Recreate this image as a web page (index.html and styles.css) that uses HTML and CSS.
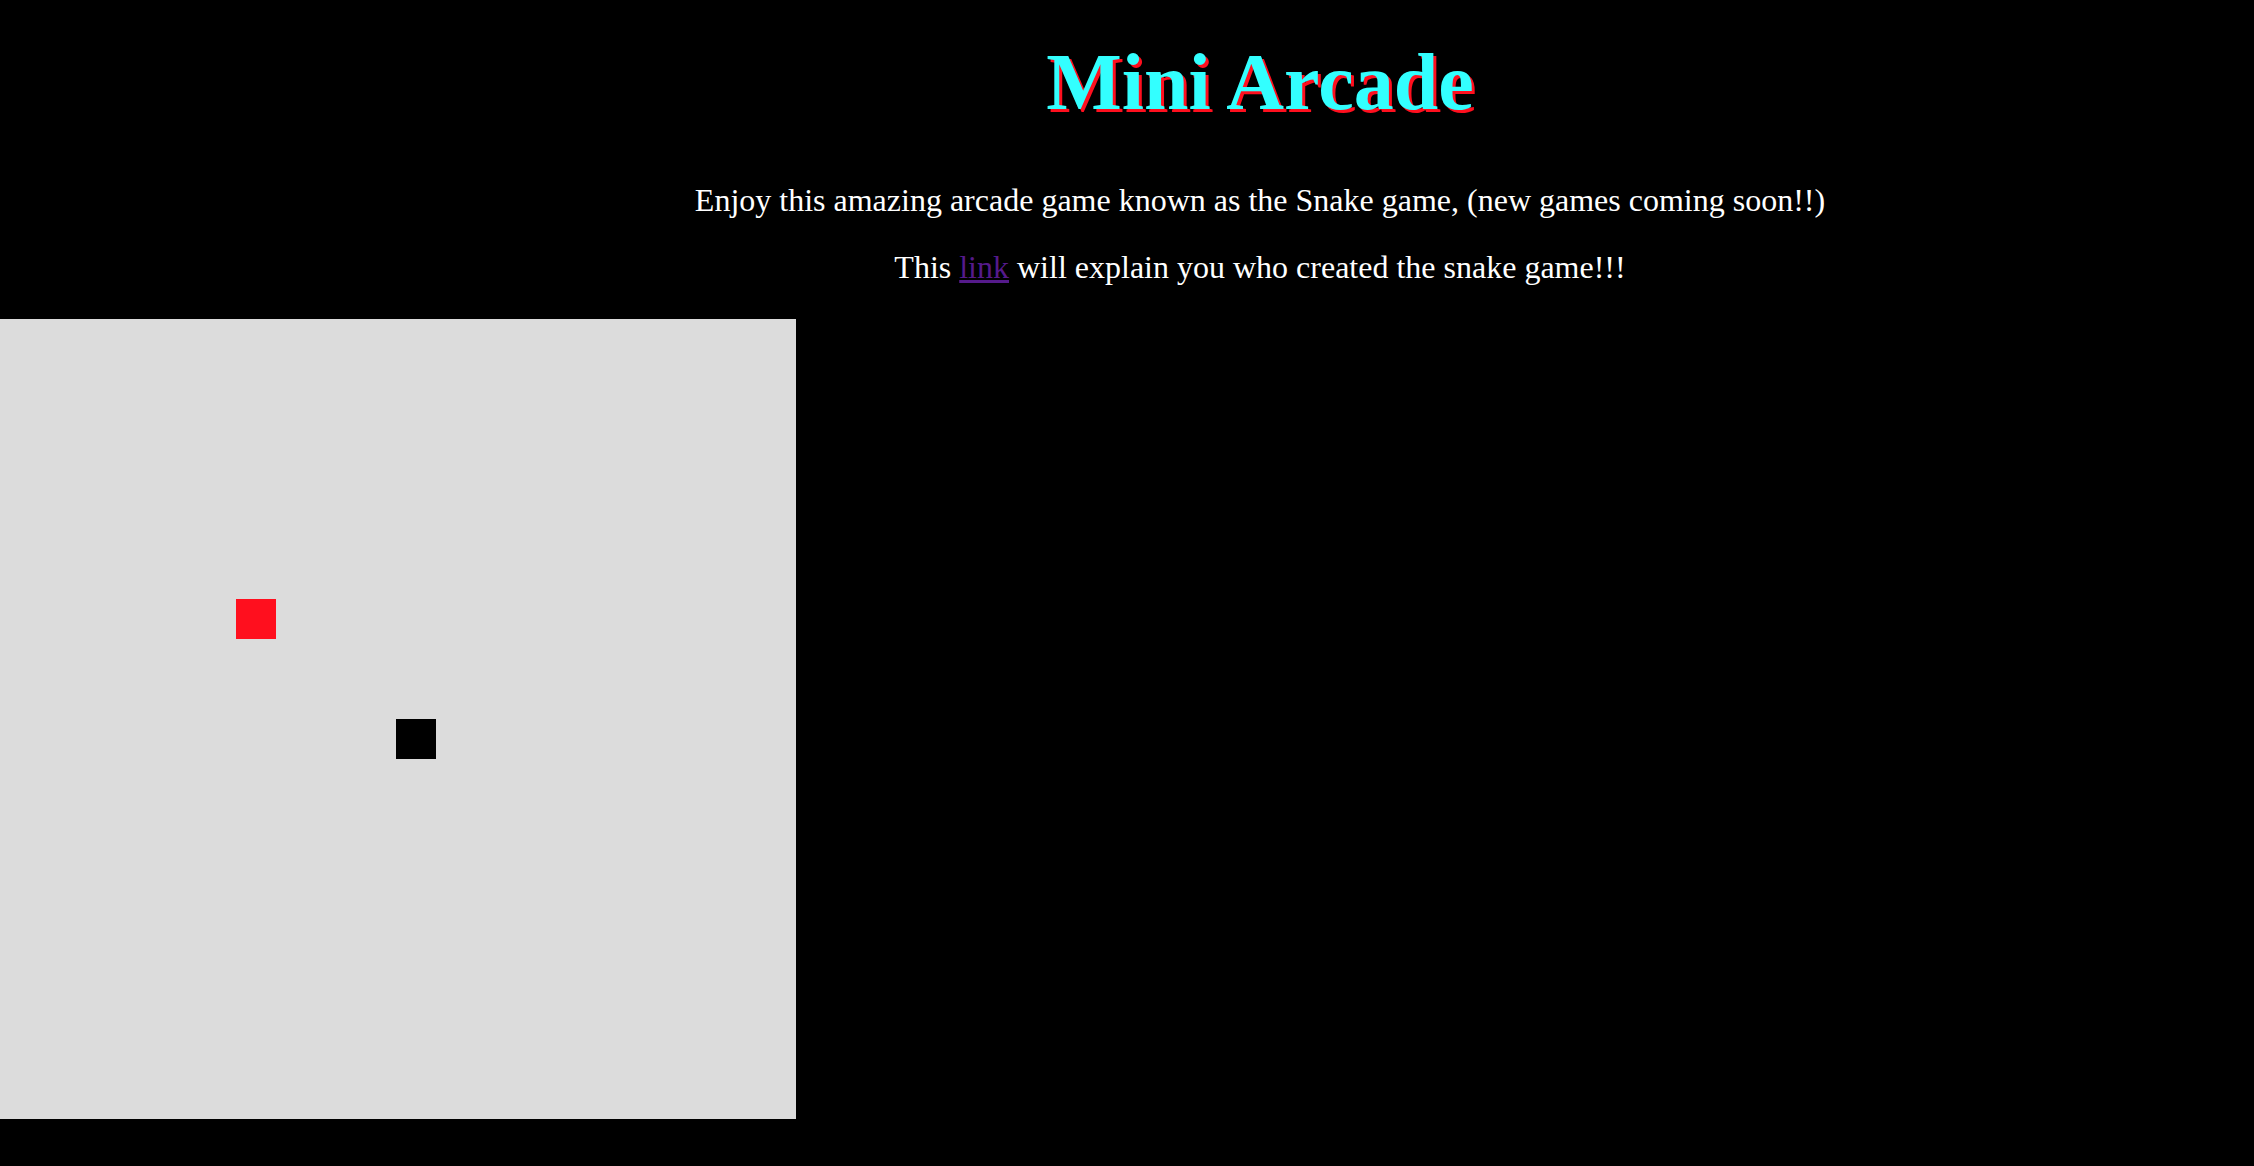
FILE: index.html
```html
<!DOCTYPE html>
<html>
<head>
<meta charset="utf-8">
<link rel="stylesheet" href="styles.css">
<title>Mini Arcade</title>
</head>
<body>
<header class="intro">
  <h1 class="title">Mini Arcade</h1>
  <p class="lead">Enjoy this amazing arcade game known as the Snake game, (new games coming soon!!)</p>
  <p class="info">This <a class="ref" href="#">link</a> will explain you who created the snake game!!!</p>
</header>
<div class="board">
  <div class="cell food"></div>
  <div class="cell snake"></div>
</div>
</body>
</html>
```
FILE: styles.css
```css
html, body {
  margin: 0;
  padding: 0;
  background: #000;
}
body {
  font-family: "Liberation Serif", "Times New Roman", serif;
  color: #fff;
  overflow: hidden;
  height: 1166px;
}
.intro {
  text-align: center;
  padding-top: 37px;
  padding-left: 266px;
}
.title {
  font-size: 80px;
  font-weight: bold;
  color: #33ffff;
  text-shadow: 3px 3px 0 #ff0f1e;
  margin: 0 0 54px;
  line-height: normal;
}
.lead {
  font-size: 32px;
  margin: 0 0 30px;
}
.info {
  font-size: 32px;
  margin: 0 0 33px;
}
.ref {
  color: #551a8b;
  text-decoration: underline;
}
.board {
  position: relative;
  width: 800px;
  height: 800px;
  margin-left: -4px;
  background: #dcdcdc;
}
.cell {
  position: absolute;
  width: 40px;
  height: 40px;
}
.food {
  left: 240px;
  top: 280px;
  background: #ff0f1e;
}
.snake {
  left: 400px;
  top: 400px;
  background: #000;
}
```
